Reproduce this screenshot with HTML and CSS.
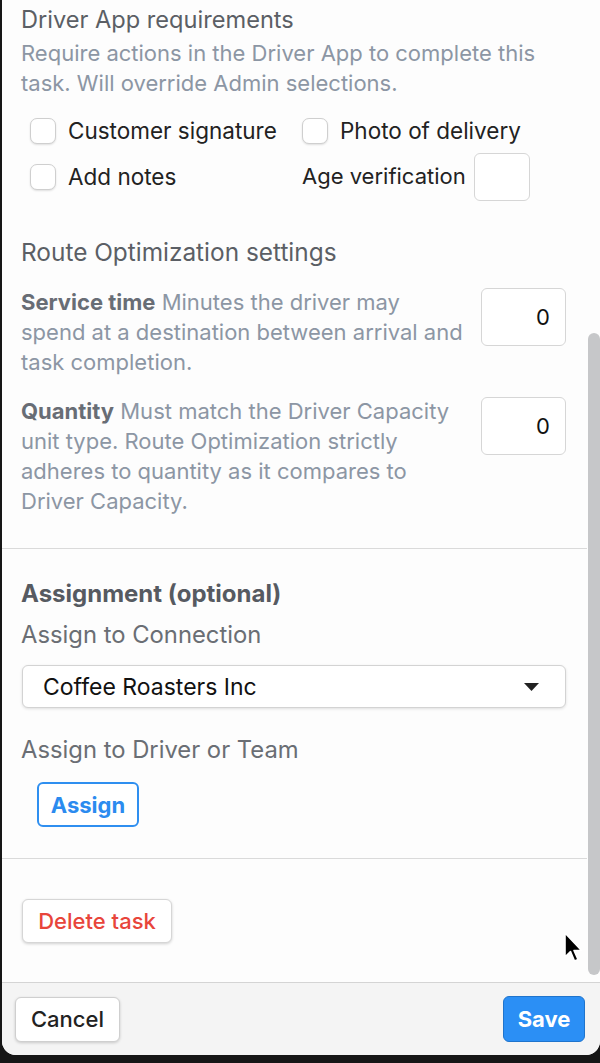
FILE: index.html
```html
<!DOCTYPE html>
<html lang="en">
<head>
  <meta charset="UTF-8">
  <meta name="viewport" content="width=device-width, initial-scale=1.0">
  <link rel="stylesheet" href="styles.css">
</head>
<body>
  <div class="modal">
    <div class="modal-body">
      <div class="content">
        <section class="section section-driver">
          <h3 class="section-title">Driver App requirements</h3>
          <p class="hint">Require actions in the Driver App to complete this task. Will override Admin selections.</p>

          <div class="check-grid">
            <label class="check"><input type="checkbox"><span>Customer signature</span></label>
            <label class="check"><input type="checkbox"><span>Photo of delivery</span></label>
            <label class="check"><input type="checkbox"><span>Add notes</span></label>
            <label class="check age">Age verification <input type="text" class="box-input age-input"></label>
          </div>

          <h3 class="section-title route-title">Route Optimization settings</h3>

          <div class="setting-row">
            <p class="setting-text"><strong>Service time</strong> Minutes the driver may spend at a destination between arrival and task completion.</p>
            <input type="text" class="box-input num-input" value="0">
          </div>
          <div class="setting-row quantity-row">
            <p class="setting-text"><strong>Quantity</strong> Must match the Driver Capacity unit type. Route Optimization strictly adheres to quantity as it compares to Driver Capacity.</p>
            <input type="text" class="box-input num-input" value="0">
          </div>
        </section>

        <section class="section section-assign">
          <h4 class="assign-title">Assignment (optional)</h4>
          <div class="field-label">Assign to Connection</div>
          <div class="select">
            <span>Coffee Roasters Inc</span>
            <svg width="15" height="8" viewBox="0 0 15 8"><path d="M0 0 H15 L7.5 8 Z" fill="#222"/></svg>
          </div>
          <div class="field-label driver-label">Assign to Driver or Team</div>
          <button class="btn btn-outline">Assign</button>
        </section>

        <section class="section section-delete">
          <button class="btn btn-delete">Delete task</button>
        </section>
      </div>
      <div class="scrollbar"><div class="thumb"></div></div>
    </div>

    <footer class="modal-footer">
      <button class="btn btn-cancel">Cancel</button>
      <button class="btn btn-save">Save</button>
    </footer>
  </div>

  <svg class="cursor" width="22" height="34" viewBox="0 0 22 34">
    <path d="M2 2 L2 26 L7.5 20.5 L11.5 30 L15 28.5 L11 19.5 L18.5 19.5 Z" fill="#000" stroke="#fff" stroke-width="1.6" stroke-linejoin="round"/>
  </svg>
</body>
</html>
```

FILE: styles.css
```css
body {
  margin: 0;
  background-color: #161616;
  font-family: Inter, "Liberation Sans", Arial, sans-serif;
  font-size: 22px;
  line-height: 30px;
}

.modal {
  margin-left: 2px;
  width: 598px;
  height: 1055px;
  background-color: #fdfdfd;
  border-radius: 0 0 14px 14px;
  overflow: hidden;
  display: flex;
  flex-direction: column;
}

.modal-body {
  flex: 1;
  display: flex;
  min-height: 0;
}

.content {
  flex: 1;
  display: flex;
  flex-direction: column;
}

.scrollbar {
  width: 13px;
  padding-top: 333px;
}

.thumb {
  width: 12px;
  height: 642px;
  margin-left: 1px;
  background-color: #c6c7c9;
  border-radius: 6px;
}

.section {
  padding: 5px 21px 32px 19px;
}

.section + .section {
  border-top: 1px solid #dadada;
}

.section-title {
  margin: 0;
  font-size: 23.6px;
  font-weight: 400;
  color: #5b5f65;
}

.route-title {
  margin-top: 36px;
  font-size: 24.4px;
}

.hint {
  margin: 3px 0 0;
  color: #8c96a4;
}

.check-grid {
  display: grid;
  grid-template-columns: 272px 1fr;
  grid-template-rows: 26px 48px;
  row-gap: 9px;
  margin: 20px 0 0 9px;
}

.check {
  display: flex;
  align-items: center;
  gap: 12px;
  font-size: 22.5px;
  color: #222;
}

.check input[type="checkbox"] {
  appearance: none;
  margin: 0;
  width: 26px;
  height: 26px;
  border: 1px solid #cfcfcf;
  border-radius: 7px;
  background: #fff;
  box-shadow: 0 1px 2px rgba(0, 0, 0, 0.12);
}

.check.age {
  gap: 8px;
  margin-top: -3px;
  font-size: 22px;
}

.box-input {
  box-sizing: border-box;
  border: 1px solid #d6d6d6;
  border-radius: 6px;
  background: #fff;
  font-family: inherit;
  font-size: 22px;
  color: #111;
}

.age-input {
  width: 56px;
  height: 48px;
  margin-top: 3px;
}

.setting-row {
  display: flex;
  align-items: flex-start;
  gap: 16px;
  margin-top: 20px;
}

.quantity-row {
  margin-top: 19px;
}

.setting-text {
  flex: 1;
  margin: 0;
  color: #8c96a4;
}

.setting-text strong {
  color: #686d75;
  font-weight: 700;
}

.num-input {
  width: 85px;
  height: 58px;
  margin-top: 1px;
  padding: 0 15px;
  text-align: right;
}

.section-assign {
  padding-top: 30px;
  padding-bottom: 31px;
}

.assign-title {
  margin: 0;
  font-size: 24px;
  font-weight: 700;
  color: #565a61;
}

.field-label {
  margin-top: 11px;
  font-size: 23.8px;
  color: #6a6e74;
}

.driver-label {
  margin-top: 27px;
}

.select {
  display: flex;
  align-items: center;
  justify-content: space-between;
  box-sizing: border-box;
  height: 43px;
  margin: 15px 0 0 1px;
  padding: 0 26px 0 20px;
  border: 1px solid #d3d3d3;
  border-radius: 6px;
  background: #fff;
  box-shadow: 0 1px 3px rgba(0, 0, 0, 0.12);
  font-size: 23px;
  color: #111;
}

.btn {
  box-sizing: border-box;
  height: 45px;
  border-radius: 6px;
  font-family: inherit;
  font-size: 22px;
  background: #fff;
  cursor: pointer;
}

.btn-outline {
  display: block;
  width: 102px;
  margin: 17px 0 0 16px;
  border: 2px solid #2f8ff0;
  color: #2b8bef;
  font-weight: 700;
}

.section-delete {
  flex: 1;
  padding-top: 40px;
}

.btn-delete {
  width: 150px;
  height: 44px;
  margin-left: 1px;
  border: 1px solid #d6d6d6;
  box-shadow: 0 1px 3px rgba(0, 0, 0, 0.18);
  color: #e8453b;
  font-weight: 500;
}

.modal-footer {
  display: flex;
  align-items: center;
  justify-content: space-between;
  height: 72px;
  padding: 0 15px 0 13px;
  border-top: 1px solid #d4d4d4;
  background-color: #f4f4f4;
}

.btn-cancel {
  width: 105px;
  border: 1px solid #cfcfcf;
  box-shadow: 0 1px 3px rgba(0, 0, 0, 0.18);
  color: #222;
  font-weight: 500;
}

.btn-save {
  width: 82px;
  height: 46px;
  border: 1px solid #1f74cc;
  background-color: #2b8ff5;
  color: #fff;
  font-weight: 700;
}

.cursor {
  position: absolute;
  left: 563px;
  top: 931px;
}
```
